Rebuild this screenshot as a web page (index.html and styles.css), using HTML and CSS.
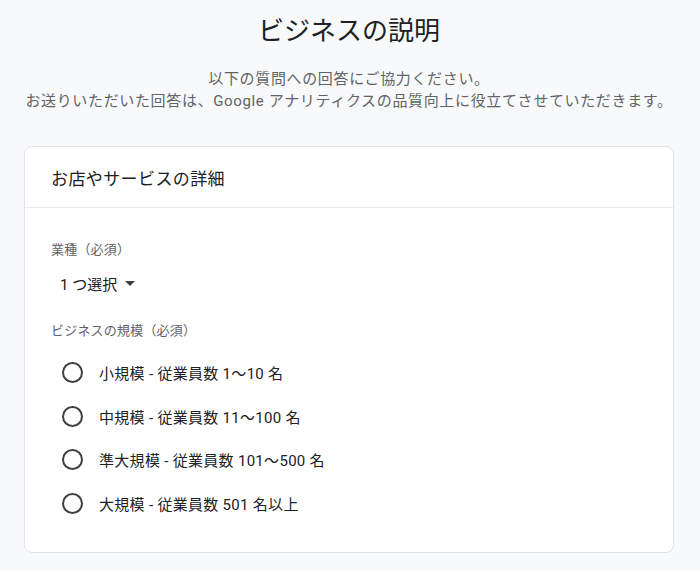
FILE: index.html
```html
<!DOCTYPE html>
<html lang="ja">
<head>
<meta charset="utf-8">
<title>ビジネスの説明</title>
<link rel="stylesheet" href="styles.css">
</head>
<body>
<div class="page">
  <header class="intro">
    <h1 class="title">ビジネスの説明</h1>
    <p class="subtitle">以下の質問への回答にご協力ください。<br>お送りいただいた回答は、Google アナリティクスの品質向上に役立てさせていただきます。</p>
  </header>
  <section class="card">
    <div class="card-header">お店やサービスの詳細</div>
    <div class="card-body">
      <div class="field-label">業種（必須）</div>
      <div class="select">
        <span>1 つ選択</span>
        <svg class="caret" width="10" height="5" viewBox="0 0 10 5"><path d="M0 0h10L5 5z" fill="#3c4043"/></svg>
      </div>
      <div class="field-label second">ビジネスの規模（必須）</div>
      <div class="radio-group">
        <label class="radio-row"><span class="radio"></span><span class="radio-text">小規模 - 従業員数 1～10 名</span></label>
        <label class="radio-row"><span class="radio"></span><span class="radio-text">中規模 - 従業員数 11～100 名</span></label>
        <label class="radio-row"><span class="radio"></span><span class="radio-text">準大規模 - 従業員数 101～500 名</span></label>
        <label class="radio-row"><span class="radio"></span><span class="radio-text">大規模 - 従業員数 501 名以上</span></label>
      </div>
    </div>
  </section>
</div>
</body>
</html>
```
FILE: styles.css
```css
* { box-sizing: border-box; }
html, body { margin: 0; padding: 0; }
body {
  background: #f8f9fa;
  font-family: Roboto, "Noto Sans CJK JP", sans-serif;
  color: #202124;
}
.page {
  padding: 0 26px 0 24px;
}
.intro {
  text-align: center;
  padding-top: 13px;
}
.title {
  margin: 0;
  font-size: 26px;
  font-weight: 400;
  line-height: 36px;
  color: #202124;
}
.subtitle {
  margin: 19px 0 0;
  font-size: 15px;
  line-height: 22px;
  letter-spacing: 0.65px;
  color: #5f6368;
}
.card {
  margin-top: 34px;
  background: #fff;
  border: 1px solid #e0e2e5;
  border-radius: 8px;
}
.card-header {
  height: 61px;
  display: flex;
  align-items: center;
  padding: 0 26px;
  font-size: 17px;
  letter-spacing: 0.4px;
  border-bottom: 1px solid #e8eaed;
  color: #202124;
}
.card-body {
  padding: 32px 26px 27px;
}
.field-label {
  font-size: 13px;
  line-height: 20px;
  letter-spacing: 0.2px;
  color: #5f6368;
}
.field-label.second {
  margin-top: 22px;
}
.select {
  display: flex;
  align-items: center;
  gap: 8px;
  height: 32px;
  margin-top: 7px;
  padding-left: 9px;
  font-size: 15px;
  color: #202124;
}
.caret { margin-top: 1px; }
.radio-group {
  margin-top: 10px;
  display: flex;
  flex-direction: column;
}
.radio-row {
  display: flex;
  align-items: center;
  height: 43.5px;
  padding-left: 11px;
  gap: 16px;
  font-size: 15px;
}
.radio {
  width: 21px;
  height: 21px;
  border: 2px solid #3c4043;
  border-radius: 50%;
  flex: none;
}
.radio-text {
  color: #202124;
  letter-spacing: 0.3px;
}
```
